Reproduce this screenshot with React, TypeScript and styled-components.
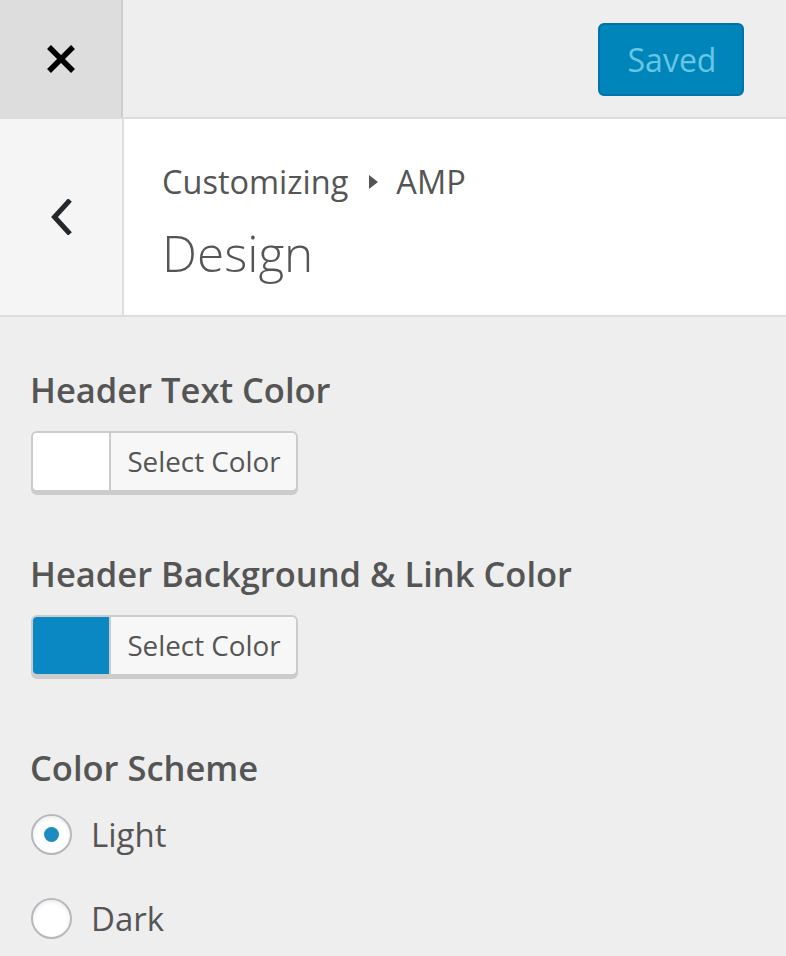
import React from "react";
import styled, { createGlobalStyle } from "styled-components";

const Global = createGlobalStyle`
  html, body { margin: 0; padding: 0; background: #eeeeee; }
  body { font-family: "Open Sans", "Noto Sans", sans-serif; color: #555555; }
  * { box-sizing: border-box; }
`;

const Panel = styled.div`
  width: 786px;
  height: 956px;
  background: #eeeeee;
  overflow: hidden;
  display: flex;
  flex-direction: column;
  & > * { flex-shrink: 0; }
`;

const TopBar = styled.div`
  height: 119px;
  display: flex;
  align-items: stretch;
  border-bottom: 2px solid #dddddd;
  background: #eeeeee;
`;

const CloseButton = styled.button`
  width: 123px;
  border: 0;
  border-right: 2px solid #cccccc;
  background: #dddddd;
  display: flex;
  align-items: center;
  justify-content: center;
  padding: 0 0 0 1px;
  color: #000;
`;

const TopSpacer = styled.div`
  flex: 1;
  display: flex;
  justify-content: flex-end;
  align-items: flex-start;
  padding: 23px 42px 0 0;
`;

const SavedButton = styled.button`
  width: 146px;
  height: 73px;
  border-radius: 6px;
  border: 2px solid #0073aa;
  background: #0085ba;
  color: #66c6e4;
  font-family: "Open Sans", "Noto Sans", sans-serif;
  font-size: 32px;
  padding: 0 0 0 2px;
`;

const SectionHeader = styled.div`
  height: 198px;
  display: flex;
  border-bottom: 2px solid #dddddd;
`;

const BackButton = styled.button`
  width: 124px;
  border: 0;
  border-right: 2px solid #dddddd;
  background: #f5f5f5;
  display: flex;
  align-items: center;
  justify-content: center;
  padding: 0 0 0 2px;
  color: #23282d;
`;

const TitleBlock = styled.div`
  flex: 1;
  background: #ffffff;
  padding: 43px 0 0 38px;
`;

const Breadcrumb = styled.div`
  font-size: 32.5px;
  line-height: 40px;
  color: #555555;
  display: flex;
  align-items: center;
  gap: 17px;
`;

const Arrow = styled.span`
  display: inline-block;
  width: 0;
  height: 0;
  border-top: 7px solid transparent;
  border-bottom: 7px solid transparent;
  border-left: 9px solid #555555;
  margin: 0 1px 0 4px;
`;

const Title = styled.div`
  font-size: 49.5px;
  font-weight: 300;
  line-height: 60px;
  margin-top: 21px;
  color: #555555;
`;

const Content = styled.div`
  padding: 52px 31px 0;
  display: flex;
  flex-direction: column;
`;

const Control = styled.div<{ $space: number }>`
  display: flex;
  flex-direction: column;
  margin-bottom: ${(p) => p.$space}px;
`;

const Label = styled.div`
  font-size: 34.5px;
  font-weight: 600;
  line-height: 42px;
  color: #555555;
  margin-bottom: 20px;
  margin-left: -1px;
`;

const ColorButton = styled.button`
  display: flex;
  width: 267px;
  height: 61px;
  border: 2px solid #cccccc;
  border-radius: 6px;
  box-shadow: 0 3px 0 #cccccc;
  padding: 0;
  overflow: hidden;
  background: #f7f7f7;
`;

const Swatch = styled.span<{ $color: string }>`
  width: 78px;
  height: 100%;
  background: ${(p) => p.$color};
  border-right: 2px solid #cccccc;
`;

const SwatchText = styled.span`
  flex: 1;
  display: flex;
  align-items: center;
  justify-content: center;
  font-family: "Open Sans", "Noto Sans", sans-serif;
  font-size: 27.8px;
  color: #555555;
  padding: 0 0 2px 1px;
`;

const RadioList = styled.div`
  display: flex;
  flex-direction: column;
  gap: 42px;
  margin-top: 4px;
`;

const RadioRow = styled.label`
  display: flex;
  align-items: center;
  gap: 19px;
  height: 42px;
  font-size: 33px;
  color: #555555;
`;

const Radio = styled.span<{ $checked?: boolean }>`
  width: 41px;
  height: 41px;
  border-radius: 50%;
  border: 2px solid #b4b9be;
  background: #ffffff;
  box-shadow: inset 0 2px 4px rgba(0, 0, 0, 0.08);
  display: flex;
  align-items: center;
  justify-content: center;
  &::after {
    content: "";
    width: 15px;
    height: 15px;
    border-radius: 50%;
    background: #1e8cbe;
    display: ${(p) => (p.$checked ? "block" : "none")};
  }
`;

export default function App() {
  return (
    <>
      <Global />
      <Panel>
        <TopBar>
          <CloseButton aria-label="Close">
            <svg width="28" height="28" viewBox="0 0 28 28">
              <path d="M2 2 L26 26 M26 2 L2 26" stroke="#000" strokeWidth="5.5" strokeLinecap="butt" />
            </svg>
          </CloseButton>
          <TopSpacer>
            <SavedButton>Saved</SavedButton>
          </TopSpacer>
        </TopBar>
        <SectionHeader>
          <BackButton aria-label="Back">
            <svg width="22" height="36" viewBox="0 0 22 36">
              <path d="M19 1 L3.5 18 L19 35" stroke="#23282d" strokeWidth="5" fill="none" />
            </svg>
          </BackButton>
          <TitleBlock>
            <Breadcrumb>
              <span>Customizing</span>
              <Arrow />
              <span>AMP</span>
            </Breadcrumb>
            <Title>Design</Title>
          </TitleBlock>
        </SectionHeader>
        <Content>
          <Control $space={61}>
            <Label>Header Text Color</Label>
            <ColorButton>
              <Swatch $color="#ffffff" />
              <SwatchText>Select Color</SwatchText>
            </ColorButton>
          </Control>
          <Control $space={71}>
            <Label>Header Background &amp; Link Color</Label>
            <ColorButton>
              <Swatch $color="#0a88c3" />
              <SwatchText>Select Color</SwatchText>
            </ColorButton>
          </Control>
          <Control $space={0}>
            <Label>Color Scheme</Label>
            <RadioList>
              <RadioRow>
                <Radio $checked />
                Light
              </RadioRow>
              <RadioRow>
                <Radio />
                Dark
              </RadioRow>
            </RadioList>
          </Control>
        </Content>
      </Panel>
    </>
  );
}
